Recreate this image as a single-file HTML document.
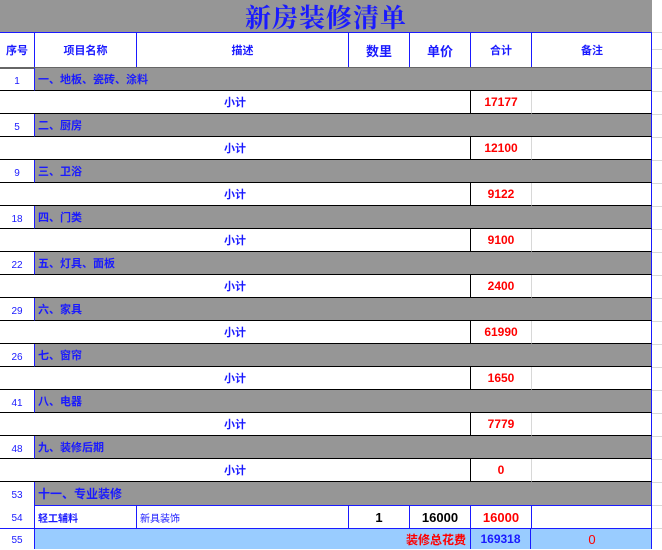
<!DOCTYPE html>
<html><head><meta charset="utf-8">
<style>
*{margin:0;padding:0;box-sizing:border-box}
body{width:662px;height:549px;overflow:hidden;background:#fff;position:relative;font-family:"Liberation Sans","Noto Sans CJK SC",sans-serif;font-size:11px;font-weight:bold;color:#1a1aff}
.a{position:absolute}
.c{display:flex;align-items:center;justify-content:center}
.l{display:flex;align-items:center;padding-left:3px}
.gl{position:absolute;left:652px;width:10px;height:1px;background:#d8d8d8}
</style></head><body>
<div class="a c" style="left:0;top:0;width:652px;height:32px;background:#969696;font-family:'Liberation Serif','Noto Serif CJK SC',serif;font-size:26px;font-weight:bold;color:#1a1aff;letter-spacing:1px">新房装修清单</div>
<div class="a" style="left:0;top:32px;width:652px;height:37px;border-top:1px solid #1a1aff;border-bottom:2px solid #666;border-right:1px solid #1a1aff"></div>
<div class="a c" style="left:0;top:33px;width:34px;height:34px">序号</div>
<div class="a c" style="left:34px;top:33px;width:102px;height:34px;border-left:1px solid #1a1aff">项目名称</div>
<div class="a c" style="left:136px;top:33px;width:212px;height:34px;border-left:1px solid #1a1aff">描述</div>
<div class="a c" style="left:348px;top:33px;width:61px;height:34px;border-left:1px solid #1a1aff;font-size:13px;align-items:flex-start;padding-top:8px">数里</div>
<div class="a c" style="left:409px;top:33px;width:61px;height:34px;border-left:1px solid #1a1aff;font-size:13px;align-items:flex-start;padding-top:8px">单价</div>
<div class="a c" style="left:470px;top:33px;width:61px;height:34px;border-left:1px solid #1a1aff">合计</div>
<div class="a c" style="left:531px;top:33px;width:121px;height:34px;border-left:1px solid #1a1aff;align-items:flex-start;padding-top:9px">备注</div>
<div class="gl" style="top:32px"></div><div class="gl" style="top:49px"></div><div class="gl" style="top:68px"></div>

<div id="rows"></div>
<script>
var d=[["1","一、地板、瓷砖、涂料","17177"],["5","二、厨房","12100"],["9","三、卫浴","9122"],["18","四、门类","9100"],["22","五、灯具、面板","2400"],["29","六、家具","61990"],["26","七、窗帘","1650"],["41","八、电器","7779"],["48","九、装修后期","0"]];
var h="";
d.forEach(function(r,i){
 var y=68+46*i;
 h+='<div class="a c" style="left:0;top:'+(y+3)+'px;width:34px;height:20px;font-weight:normal;font-size:10px">'+r[0]+'</div>';
 h+='<div class="a" style="left:0;top:'+(y+22)+'px;width:34px;height:1px;background:#000"></div>';
 h+='<div class="a l" style="left:34px;top:'+y+'px;width:618px;height:23px;background:#969696;border-left:1px solid #1a1aff;border-right:1px solid #1a1aff;border-bottom:1px solid #000">'+r[1]+'</div>';
 var y2=y+23;
 h+='<div class="a c" style="left:0;top:'+y2+'px;width:470px;height:23px;border-bottom:1px solid #000">小计</div>';
 h+='<div class="a c" style="left:470px;top:'+y2+'px;width:61px;height:23px;border-left:1px solid #000;border-bottom:1px solid #000;color:#f00;font-size:12px">'+r[2]+'</div>';
 h+='<div class="a" style="left:531px;top:'+y2+'px;width:121px;height:23px;border-left:1px solid #d8d8d8;border-right:1px solid #1a1aff;border-bottom:1px solid #000"></div>';
 h+='<div class="gl" style="top:'+y+'px"></div><div class="gl" style="top:'+y2+'px"></div>';
});
document.getElementById('rows').innerHTML=h;
</script>
<div class="a c" style="left:0;top:484px;width:34px;height:22px;font-weight:normal;font-size:10px">53</div>
<div class="a l" style="left:34px;top:482px;width:618px;height:24px;background:#969696;border-left:1px solid #1a1aff;border-right:1px solid #1a1aff;border-bottom:1px solid #1a1aff;font-size:12px">十一、专业装修</div>
<div class="a" style="left:0;top:505px;width:652px;height:24px;border-bottom:1px solid #1a1aff;border-right:1px solid #1a1aff"></div>
<div class="a c" style="left:0;top:507px;width:34px;height:22px;font-weight:normal;font-size:10px">54</div>
<div class="a l" style="left:34px;top:506px;width:102px;height:22px;border-left:1px solid #1a1aff;font-size:10px">轻工辅料</div>
<div class="a l" style="left:136px;top:506px;width:212px;height:22px;border-left:1px solid #1a1aff;font-size:10px;font-weight:normal">新具装饰</div>
<div class="a c" style="left:348px;top:506px;width:61px;height:22px;border-left:1px solid #1a1aff;color:#000;font-size:13px">1</div>
<div class="a c" style="left:409px;top:506px;width:61px;height:22px;border-left:1px solid #1a1aff;color:#000;font-size:13px">16000</div>
<div class="a c" style="left:470px;top:506px;width:61px;height:22px;border-left:1px solid #1a1aff;color:#f00;font-size:13px">16000</div>
<div class="a" style="left:531px;top:506px;width:1px;height:22px;background:#1a1aff"></div>
<div class="a c" style="left:0;top:530px;width:34px;height:20px;font-weight:normal;font-size:10px">55</div>
<div class="a" style="left:34px;top:529px;width:618px;height:20px;background:#99ccff;border-left:1px solid #1a1aff;border-right:1px solid #1a1aff"></div>
<div class="a" style="left:400px;top:529px;width:70px;height:20px;display:flex;align-items:center;justify-content:flex-end;padding-right:4px;color:#f00;font-size:12px;white-space:nowrap">装修总花费</div>
<div class="a c" style="left:470px;top:529px;width:61px;height:20px;border-left:1px solid #1a1aff;border-right:1px solid #1a1aff;font-size:12px">169318</div>
<div class="a c" style="left:572px;top:529px;width:40px;height:20px;color:#f00;font-size:13px;font-weight:normal">0</div>
<div class="gl" style="top:482px"></div><div class="gl" style="top:505px"></div><div class="gl" style="top:528px"></div>
</body></html>
